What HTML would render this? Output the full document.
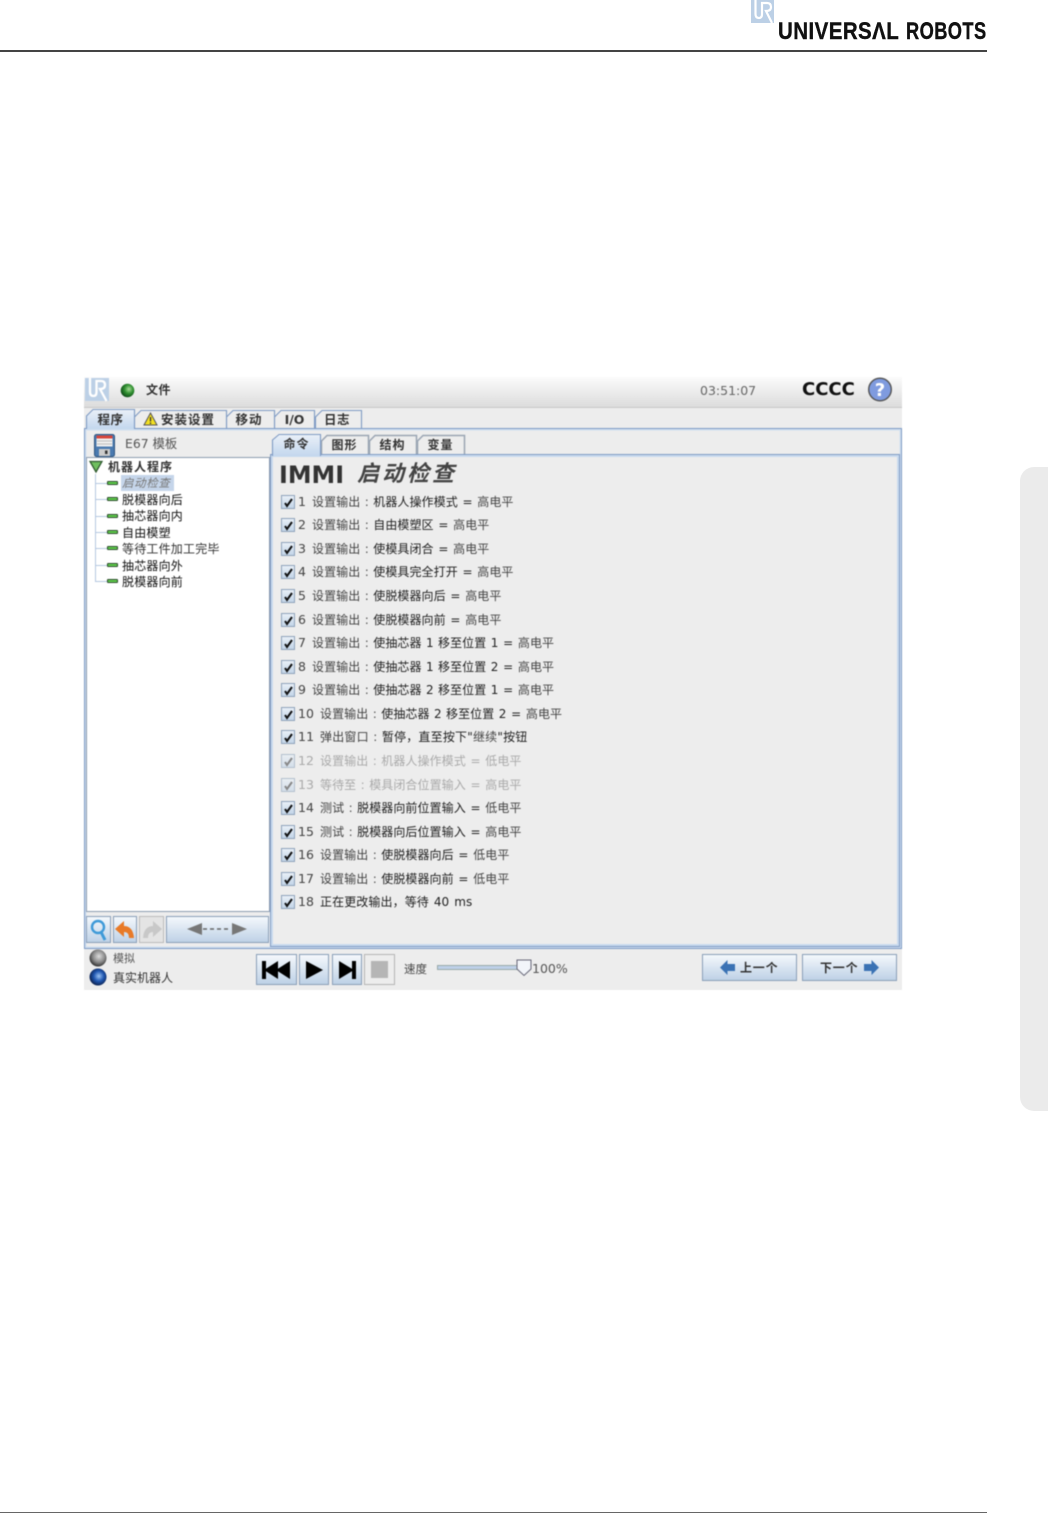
<!DOCTYPE html>
<html><head><meta charset="utf-8"><style>
html,body{margin:0;padding:0;background:#fff}
body{width:1048px;height:1513px;position:relative;overflow:hidden;font-family:"DejaVu Sans","WenQuanYi Zen Hei","Noto Sans CJK SC",sans-serif;font-size:12px;color:#333}
.a{position:absolute;white-space:pre}
#app{position:absolute;left:84px;top:377px;width:818px;height:613px;background:#ededed;filter:blur(.4px);overflow:hidden}
.tab{position:absolute;top:34px;height:18px;text-align:center;line-height:18px;font-weight:bold;font-size:12.500px;letter-spacing:.5px;color:#333}
.st{position:absolute;top:57px;height:20px;text-align:center;line-height:20px;font-weight:bold;font-size:12px;letter-spacing:1px;color:#333}
.btn{position:absolute;box-sizing:border-box;border:1px solid #8a9fb8;background:linear-gradient(#f4f8fc,#bed1e6)}
.r{position:absolute;left:214px;height:16px;line-height:16px;white-space:pre;font-size:12px;letter-spacing:.07px;color:#222}
.r i{font-style:normal}
.n{display:inline-block;width:14px;font-size:12.500px;color:#444}
.nn{display:inline-block;width:22px;font-size:12.500px;color:#444}
.p{color:#444;font-size:12px}
.c{display:inline-block;width:13px;text-align:center;color:#555}
.e{display:inline-block;width:19.500px;text-align:center}
.l{color:#444}
.dis,.dis .n,.dis .nn,.dis .p,.dis .c,.dis .l{color:#aaa}
.cb{position:absolute;left:197px;width:14px;height:14px;box-sizing:border-box;border:1px solid #8fa3bb;background:linear-gradient(#e8eff7,#c3d5e8)}
.t{position:absolute;left:38px;height:16px;line-height:16px;white-space:pre;font-size:12px;letter-spacing:.2px;color:#111}
.g{position:absolute;left:23px;width:9px;height:2px;background:#5fd04a;border:1px solid #2b4a2b;border-radius:1px}
.h{position:absolute;left:11px;width:12px;height:1px;background:#b5c8e0}
</style></head><body>

<svg class="a" style="left:751px;top:0" width="24" height="24" viewBox="0 0 24 24"><rect width="23" height="23" fill="#bcd0e6"/><path d="M4.500 0V14Q4.500 18 8 18Q11 18 11 14V3H16Q20 3 20 7Q20 11 15 11L21 23" fill="none" stroke="#fff" stroke-width="2.200"/></svg>
<div class="a" style="left:778px;top:18px;font:bold 24.500px/28px 'Liberation Sans',sans-serif;color:#111;letter-spacing:.55px;transform-origin:0 0;transform:scaleX(.835);-webkit-text-stroke:.4px #111">UNIVERSΛL</div>
<div class="a" style="left:906px;top:18px;font:bold 24.500px/28px 'Liberation Sans',sans-serif;color:#111;letter-spacing:.55px;transform-origin:0 0;transform:scaleX(.745);-webkit-text-stroke:.4px #111">ROBOTS</div>
<div class="a" style="left:0;top:50px;width:987px;height:2px;background:#444"></div>
<div class="a" style="left:0;top:1512px;width:987px;height:1px;background:#666"></div>
<div class="a" style="left:1020px;top:467px;width:28px;height:644px;background:#ebebeb;border-radius:14px 0 0 14px"></div>

<div id="app">
 <div class="a" style="left:0;top:0;width:818px;height:30px;background:linear-gradient(#fbfbfb,#dcdcdc);border-bottom:1px solid #c8c8c8"></div>
 <svg class="a" style="left:1px;top:1px" width="24" height="24" viewBox="0 0 24 24"><rect width="24" height="23" fill="#bcd0e6"/><path d="M5 0V14Q5 18 8.500 18Q11.500 18 11.500 14V3H16Q20 3 20 7Q20 11 15 11L21.500 23" fill="none" stroke="#fff" stroke-width="2.300"/></svg>
 <svg class="a" style="left:36px;top:6px" width="15" height="15"><defs><radialGradient id="gg" cx=".6" cy=".4" r=".65"><stop offset="0" stop-color="#a8dc98"/><stop offset=".5" stop-color="#2f8f30"/><stop offset="1" stop-color="#0c4516"/></radialGradient></defs><circle cx="7.500" cy="7.500" r="6.800" fill="url(#gg)"/></svg>
 <div class="a" style="left:62px;top:5px;font-weight:bold;line-height:16px;letter-spacing:.5px;color:#333">文件</div>
 <div class="a" style="left:616px;top:6px;font-size:12.500px;line-height:16px;color:#666">03:51:07</div>
 <div class="a" style="left:718px;top:2px;font-size:18px;font-weight:bold;line-height:22px;color:#111">CCCC</div>
 <svg class="a" style="left:783px;top:0" width="26" height="26"><circle cx="13" cy="12.500" r="11.300" fill="#7f9bdf" stroke="#555" stroke-width="1.400"/><text x="13" y="19" text-anchor="middle" font-family="DejaVu Sans" font-weight="bold" font-size="18" fill="#fff">?</text></svg>

 <div class="a" style="left:0;top:51px;width:818px;height:521px;box-sizing:border-box;border:1px solid #7f9bc4;background:#ededed;box-shadow:inset 0 0 0 1.500px #cfdef0"></div>

 <svg class="a" style="left:0;top:30px" width="300" height="24" fill="#ededed" stroke="#7f9bc4" stroke-width="1.100">
  <path d="M231.500 21V10L238 3.500H277.500V21"/>
  <path d="M190.500 21V10L197 3.500H230.500V21"/>
  <path d="M142.500 21V10L149 3.500H190.500V21"/>
  <path d="M50.500 21V10L57 3.500H142.500V21"/>
  <defs><linearGradient id="tb" x1="0" y1="0" x2="0" y2="1"><stop offset="0" stop-color="#eaf0f8"/><stop offset="1" stop-color="#c3d7ee"/></linearGradient></defs>
  <path d="M2.500 22V9L9 2.500H50.500V22" fill="url(#tb)"/>
 </svg>
 <div class="tab" style="left:3px;width:47px;">程序</div>
 <div class="tab" style="left:50px;width:92px;text-align:left;padding-left:27px;letter-spacing:1px">安装设置</div>
 <svg class="a" style="left:59px;top:35px" width="15" height="14"><path d="M7.500 1L14 13H1Z" fill="#f4e020" stroke="#555"/><path d="M7.500 5V9.500M7.500 10.500V12" stroke="#333" stroke-width="1.300"/></svg>
 <div class="tab" style="left:141px;width:48px;letter-spacing:1px">移动</div>
 <div class="tab" style="left:190px;width:41px;letter-spacing:0">I/O</div>
 <div class="tab" style="left:231px;width:44px;">日志</div>

 <svg class="a" style="left:10px;top:57px" width="21" height="23" viewBox="0 0 21 23"><rect x=".5" y=".5" width="20" height="22" rx="2" fill="#4a7ab0" stroke="#2f5580"/><rect x="2.500" y="1.500" width="16" height="3" fill="#d8453a"/><rect x="2.500" y="4.500" width="16" height="8" fill="#f0f0f0"/><path d="M3 7H18M3 10H18" stroke="#bbb"/><rect x="5" y="15" width="11" height="7" fill="#ccc"/><rect x="11" y="16.500" width="2.500" height="3.500" fill="#333"/></svg>
 <div class="a" style="left:41px;top:59px;line-height:16px;font-size:12.400px;color:#555">E67 模板</div>

 <div class="a" style="left:2px;top:80px;width:184px;height:455px;box-sizing:border-box;border:1px solid #8d9db0;background:#fff"></div>
 <svg class="a" style="left:5px;top:83px" width="14" height="13"><path d="M1 1.500H13L7 12Z" fill="#6fbf5f" stroke="#2f5a2f" stroke-width="1.300"/></svg>
 <div class="a" style="left:24px;top:82px;line-height:16px;font-weight:bold;letter-spacing:1px;color:#333">机器人程序</div>
 <div class="a" style="left:11px;top:97px;width:1px;height:107px;background:#b5c8e0"></div>
 <div class="a" style="left:37px;top:98px;width:53px;height:16px;background:#c5d5ea"></div>
 <div class="h" style="top:106px"></div><div class="g" style="top:104px"></div>
 <div class="t" style="top:98px;font-style:italic;color:#777;letter-spacing:.6px;font-size:11.500px">启动检查</div>
 <div class="h" style="top:122px"></div><div class="g" style="top:120px"></div><div class="t" style="top:114.500px">脱模器向后</div>
 <div class="h" style="top:139px"></div><div class="g" style="top:137px"></div><div class="t" style="top:131px">抽芯器向内</div>
 <div class="h" style="top:155px"></div><div class="g" style="top:153px"></div><div class="t" style="top:147.500px">自由模塑</div>
 <div class="h" style="top:171px"></div><div class="g" style="top:169px"></div><div class="t" style="top:164px;color:#333">等待工件加工完毕</div>
 <div class="h" style="top:188px"></div><div class="g" style="top:186px"></div><div class="t" style="top:180.500px">抽芯器向外</div>
 <div class="h" style="top:204px"></div><div class="g" style="top:202px"></div><div class="t" style="top:197px">脱模器向前</div>

 <div class="btn" style="left:2px;top:539px;width:25px;height:27px"></div>
 <svg class="a" style="left:5px;top:541px" width="20" height="24"><circle cx="9" cy="9" r="6" fill="none" stroke="#3f9ad8" stroke-width="2.400"/><path d="M12 14L16 22" stroke="#3f9ad8" stroke-width="3"/></svg>
 <div class="btn" style="left:29px;top:539px;width:24px;height:27px"></div>
 <svg class="a" style="left:30px;top:541px" width="22" height="23"><path d="M1 11L10 3V8Q19 8 20 20H15Q15 14 10 14V19Z" fill="#e87a28"/></svg>
 <div class="btn" style="left:55px;top:539px;width:25px;height:27px;background:#e4e4e4;border-color:#bbb"></div>
 <svg class="a" style="left:57px;top:541px" width="22" height="23"><path d="M21 11L12 3V8Q3 8 2 20H7Q7 14 12 14V19Z" fill="#c8c8c8"/></svg>
 <div class="btn" style="left:82px;top:539px;width:103px;height:27px"></div>
 <svg class="a" style="left:102px;top:543px" width="62" height="18"><path d="M1 9L16 3V15ZM61 9L46 3V15Z" fill="#777"/><path d="M17 9H45" stroke="#666" stroke-width="1.500" stroke-dasharray="4 3"/></svg>

 <div class="a" style="left:186px;top:77px;width:630px;height:493px;box-sizing:border-box;border:1px solid #7f9bc4;background:#c9daee"></div>
 <div class="a" style="left:189px;top:80px;width:624px;height:487px;background:#ededed"></div>
 <svg class="a" style="left:186px;top:54px" width="200" height="26" fill="#ededed" stroke="#9aa5b3" stroke-width="1.500">
  <path d="M147.500 23V10L153 4.500H194.500V23"/>
  <path d="M99.500 23V10L105 4.500H146.500V23"/>
  <path d="M51.500 23V10L57 4.500H98.500V23"/>
  <path d="M2.500 25V9L9 3.500H50.500V25" fill="url(#tb)" stroke="#7f9bc4" stroke-width="1.100"/>
 </svg>
 <div class="st" style="left:188px;width:49px">命令</div>
 <div class="st" style="left:237px;width:47px;top:57.500px">图形</div>
 <div class="st" style="left:285px;width:47px;top:57.500px">结构</div>
 <div class="st" style="left:333px;width:47px;top:57.500px">变量</div>

 <div class="a" style="left:195px;top:83px;font-size:23.800px;line-height:30px;font-weight:bold;color:#333">IMMI</div>
 <div class="a" style="left:273px;top:83px;font-size:22px;line-height:30px;font-weight:bold;font-style:italic;letter-spacing:3px;color:#444">启动检查</div>

 <div class="cb" style="top:118px"></div><div class="r" style="top:117px"><i class="n">1</i><i class="p">设置输出</i><i class="c">:</i>机器人操作模式<i class="e">=</i><i class="l">高电平</i></div>
 <div class="cb" style="top:141px"></div><div class="r" style="top:140px"><i class="n">2</i><i class="p">设置输出</i><i class="c">:</i>自由模塑区<i class="e">=</i><i class="l">高电平</i></div>
 <div class="cb" style="top:165px"></div><div class="r" style="top:164px"><i class="n">3</i><i class="p">设置输出</i><i class="c">:</i>使模具闭合<i class="e">=</i><i class="l">高电平</i></div>
 <div class="cb" style="top:188px"></div><div class="r" style="top:187px"><i class="n">4</i><i class="p">设置输出</i><i class="c">:</i>使模具完全打开<i class="e">=</i><i class="l">高电平</i></div>
 <div class="cb" style="top:212px"></div><div class="r" style="top:211px"><i class="n">5</i><i class="p">设置输出</i><i class="c">:</i>使脱模器向后<i class="e">=</i><i class="l">高电平</i></div>
 <div class="cb" style="top:236px"></div><div class="r" style="top:235px"><i class="n">6</i><i class="p">设置输出</i><i class="c">:</i>使脱模器向前<i class="e">=</i><i class="l">高电平</i></div>
 <div class="cb" style="top:259px"></div><div class="r" style="top:258px;word-spacing:.5px"><i class="n">7</i><i class="p">设置输出</i><i class="c">:</i>使抽芯器 1 移至位置 1<i class="e">=</i><i class="l">高电平</i></div>
 <div class="cb" style="top:283px"></div><div class="r" style="top:282px;word-spacing:.5px"><i class="n">8</i><i class="p">设置输出</i><i class="c">:</i>使抽芯器 1 移至位置 2<i class="e">=</i><i class="l">高电平</i></div>
 <div class="cb" style="top:306px"></div><div class="r" style="top:305px;word-spacing:.5px"><i class="n">9</i><i class="p">设置输出</i><i class="c">:</i>使抽芯器 2 移至位置 1<i class="e">=</i><i class="l">高电平</i></div>
 <div class="cb" style="top:330px"></div><div class="r" style="top:329px;word-spacing:.5px"><i class="nn">10</i><i class="p">设置输出</i><i class="c">:</i>使抽芯器 2 移至位置 2<i class="e">=</i><i class="l">高电平</i></div>
 <div class="cb" style="top:353px"></div><div class="r" style="top:352px;letter-spacing:.2px"><i class="nn">11</i><i class="p">弹出窗口</i><i class="c">:</i>暂停，直至按下"<i class="l">继续</i>"按钮</div>
 <div class="cb" style="top:377px;opacity:.6"></div><div class="r dis" style="top:376px"><i class="nn">12</i><i class="p">设置输出</i><i class="c">:</i>机器人操作模式<i class="e">=</i><i class="l">低电平</i></div>
 <div class="cb" style="top:401px;opacity:.6"></div><div class="r dis" style="top:400px"><i class="nn">13</i><i class="p">等待至</i><i class="c">:</i>模具闭合位置输入<i class="e">=</i><i class="l">高电平</i></div>
 <div class="cb" style="top:424px"></div><div class="r" style="top:423px"><i class="nn">14</i><i class="p">测试</i><i class="c">:</i>脱模器向前位置输入<i class="e">=</i><i class="l">低电平</i></div>
 <div class="cb" style="top:448px"></div><div class="r" style="top:447px"><i class="nn">15</i><i class="p">测试</i><i class="c">:</i>脱模器向后位置输入<i class="e">=</i><i class="l">高电平</i></div>
 <div class="cb" style="top:471px"></div><div class="r" style="top:470px"><i class="nn">16</i><i class="p">设置输出</i><i class="c">:</i>使脱模器向后<i class="e">=</i><i class="l">低电平</i></div>
 <div class="cb" style="top:495px"></div><div class="r" style="top:494px"><i class="nn">17</i><i class="p">设置输出</i><i class="c">:</i>使脱模器向前<i class="e">=</i><i class="l">低电平</i></div>
 <div class="cb" style="top:518px"></div><div class="r" style="top:517px;word-spacing:1px;letter-spacing:.1px"><i class="nn">18</i>正在更改输出，等待 40 ms</div>

 <svg class="a" style="left:197px;top:118px" width="14" height="415" fill="none" stroke="#111" stroke-width="2">
  <path d="M4 8L6 11L11 4"/><path d="M4 31L6 34L11 27"/><path d="M4 55L6 58L11 51"/><path d="M4 78L6 81L11 74"/><path d="M4 102L6 105L11 98"/><path d="M4 126L6 129L11 122"/><path d="M4 149L6 152L11 145"/><path d="M4 173L6 176L11 169"/><path d="M4 196L6 199L11 192"/><path d="M4 220L6 223L11 216"/><path d="M4 243L6 246L11 239"/>
  <path d="M4 267L6 270L11 263" stroke="#888"/><path d="M4 291L6 294L11 287" stroke="#888"/>
  <path d="M4 314L6 317L11 310"/><path d="M4 338L6 341L11 334"/><path d="M4 361L6 364L11 357"/><path d="M4 385L6 388L11 381"/><path d="M4 408L6 411L11 404"/>
 </svg>

 <svg class="a" style="left:4px;top:572px" width="20" height="40"><defs><radialGradient id="ga" cx=".55" cy=".4" r=".6"><stop offset="0" stop-color="#ddd"/><stop offset=".6" stop-color="#888"/><stop offset="1" stop-color="#333"/></radialGradient><radialGradient id="gb" cx=".55" cy=".45" r=".6"><stop offset="0" stop-color="#9cc4f4"/><stop offset=".5" stop-color="#1f56b0"/><stop offset="1" stop-color="#0a1a40"/></radialGradient></defs><circle cx="10" cy="9" r="8.500" fill="url(#ga)"/><circle cx="10" cy="28" r="8.500" fill="url(#gb)"/></svg>
 <div class="a" style="left:29px;top:574px;line-height:16px;font-size:11px;color:#555">模拟</div>
 <div class="a" style="left:29px;top:593px;line-height:16px;color:#333">真实机器人</div>

 <div class="btn" style="left:172px;top:577px;width:41px;height:31px"></div>
 <svg class="a" style="left:178px;top:584px" width="30" height="18"><path d="M0 0H4V18H0ZM2 9L16 0V18ZM14 9L28 0V18Z" fill="#000"/></svg>
 <div class="btn" style="left:215px;top:577px;width:30px;height:31px"></div>
 <svg class="a" style="left:221px;top:584px" width="18" height="18"><path d="M1 0L18 9L1 18Z" fill="#000"/></svg>
 <div class="btn" style="left:248px;top:577px;width:30px;height:31px"></div>
 <svg class="a" style="left:255px;top:584px" width="18" height="18"><path d="M0 0L15 9L0 18ZM13 0H17V18H13Z" fill="#000"/></svg>
 <div class="btn" style="left:280px;top:577px;width:31px;height:31px;background:#ededed;border-color:#b5b5b5"></div>
 <div class="a" style="left:287px;top:584px;width:17px;height:17px;background:#b5b5b5"></div>

 <div class="a" style="left:320px;top:584px;line-height:16px;font-size:11.500px;color:#444">速度</div>
 <div class="a" style="left:353px;top:588px;width:82px;height:5px;box-sizing:border-box;border:1px solid #9aa;background:#bdd0e8"></div>
 <svg class="a" style="left:431px;top:582px" width="18" height="18"><path d="M2 1H16V10L9 16.500L2 10Z" fill="#f2f5fa" stroke="#667"/></svg>
 <div class="a" style="left:448px;top:584px;line-height:16px;font-size:12.500px;color:#555">100%</div>

 <div class="btn" style="left:618px;top:577px;width:95px;height:27px"></div>
 <svg class="a" style="left:636px;top:583px" width="16" height="15"><path d="M0 7.500L7.500 0V4H15V11H7.500V15Z" fill="#3a72b4"/></svg>
 <div class="a" style="left:656px;top:583px;line-height:16px;color:#333;font-weight:bold;font-size:12px;letter-spacing:.8px">上一个</div>
 <div class="btn" style="left:718px;top:577px;width:95px;height:27px"></div>
 <div class="a" style="left:736px;top:583px;line-height:16px;color:#333;font-weight:bold;font-size:12px;letter-spacing:.8px">下一个</div>
 <svg class="a" style="left:780px;top:583px" width="16" height="15"><path d="M15 7.500L7.500 0V4H0V11H7.500V15Z" fill="#3a72b4"/></svg>
</div>
</body></html>
